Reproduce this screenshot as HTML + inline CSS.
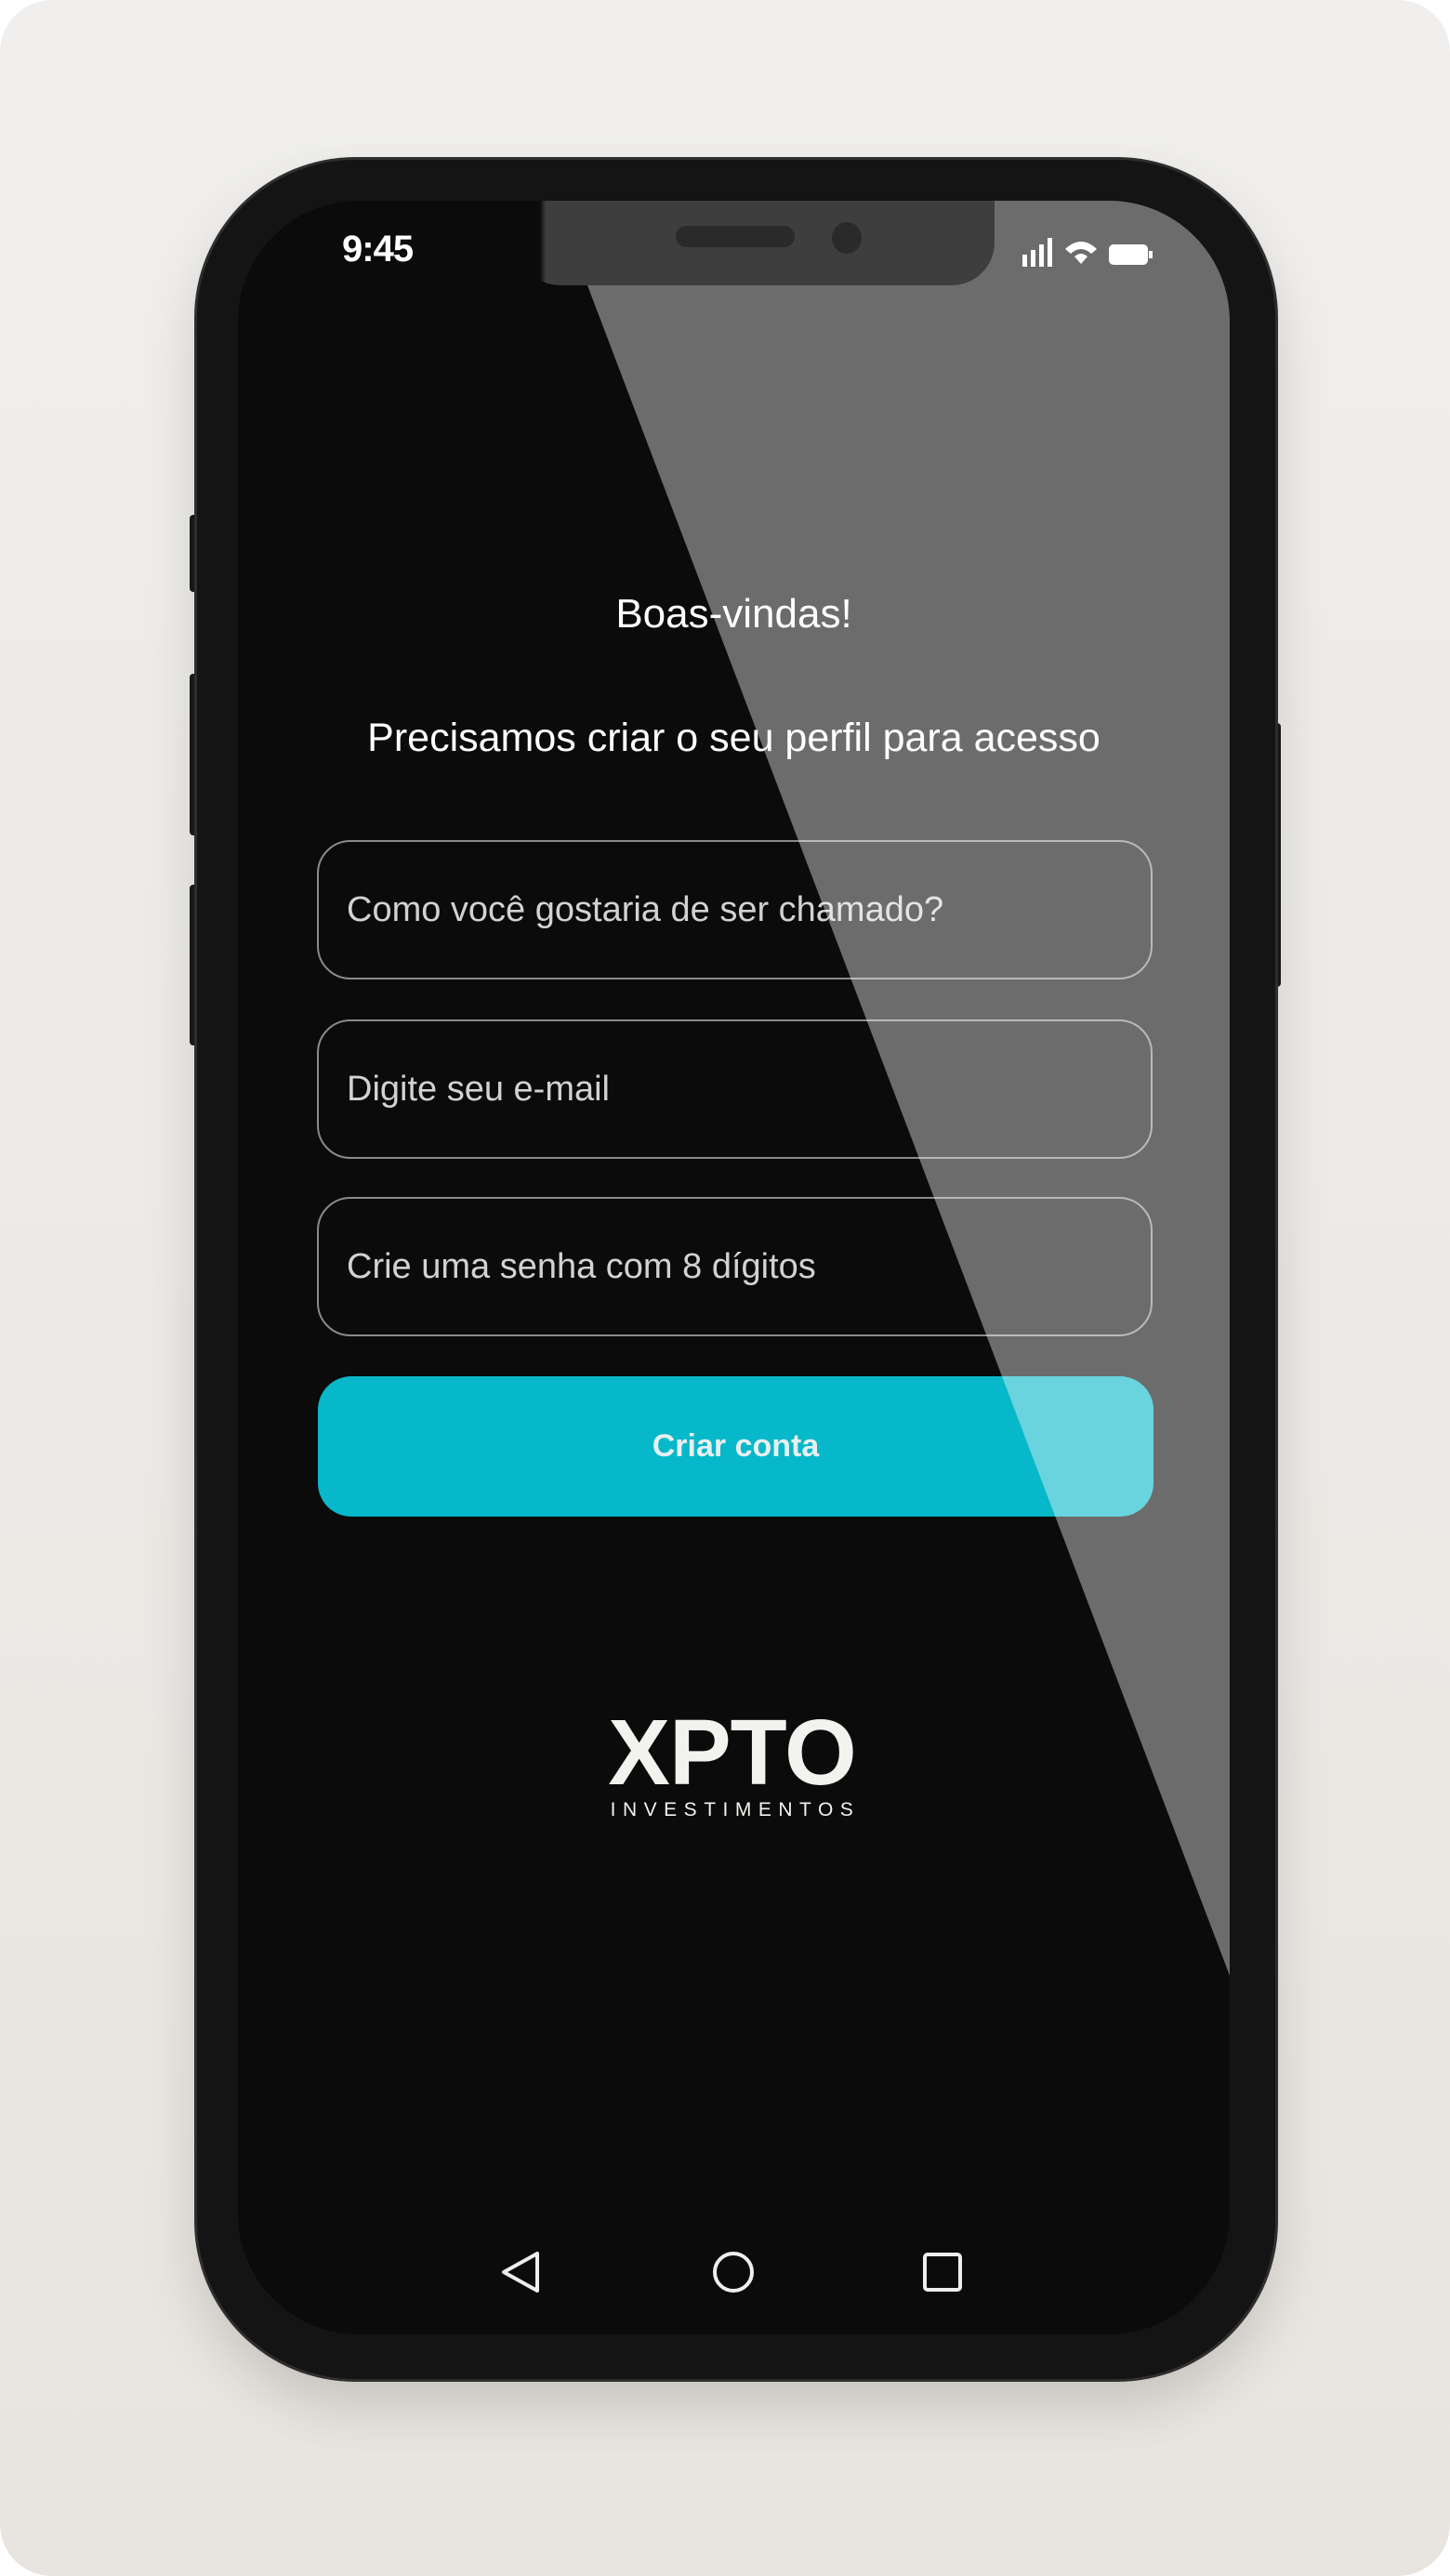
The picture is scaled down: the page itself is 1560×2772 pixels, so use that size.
<!DOCTYPE html>
<html><head><meta charset="utf-8"><style>
*{margin:0;padding:0;box-sizing:border-box}
body{width:1560px;height:2772px;background:#fff;position:relative;overflow:hidden;font-family:"Liberation Sans",sans-serif}
.bg{position:absolute;left:0;top:0;width:1560px;height:2772px;border-radius:56px;background:linear-gradient(#f0efed,#ebe8e4 70%,#e8e4df)}
.phone{position:absolute;left:212px;top:172px;width:1160px;height:2388px;border-radius:170px;background:#141414;box-shadow:0 0 0 3px #2e2e2e,0 30px 60px rgba(0,0,0,.15)}
.btn{position:absolute;background:#1a1a1a;border-radius:4px}
.screen{position:absolute;left:256px;top:216px;width:1067px;height:2296px;border-radius:130px;background:#0b0b0b;overflow:hidden}
.glare{position:absolute;left:0;top:0;width:1067px;height:2296px}
.notch{position:absolute;left:301px;top:0;width:513px;height:91px;border-radius:0 0 46px 46px;background:linear-gradient(to right,#0b0b0b 0,#0b0b0b 24px,#3e3e3e 30px)}
.t{position:absolute;color:#fff;text-align:center;width:1067px;left:0}
.inp{position:absolute;left:85px;width:899px;height:150px;border:2px solid #8a8a8a;border-radius:36px;color:#d2d2d2;font-size:38px;padding-left:30px;line-height:146px}
.cta{position:absolute;left:86px;top:1265px;width:899px;height:151px;border-radius:36px;background:#06b8c9;color:#e8efef;font-weight:bold;font-size:34px;text-align:center;line-height:151px}
</style></head><body>
<div class="bg"></div>
<div class="btn" style="left:204px;top:554px;width:10px;height:83px"></div>
<div class="btn" style="left:204px;top:725px;width:10px;height:174px"></div>
<div class="btn" style="left:204px;top:952px;width:10px;height:173px"></div>
<div class="btn" style="left:1368px;top:778px;width:10px;height:284px"></div>
<div class="phone"></div>
<div class="screen">
  <div class="t" style="top:420px;font-size:44px">Boas-vindas!</div>
  <div class="t" style="top:554px;font-size:43px">Precisamos criar o seu perfil para acesso</div>
  <div class="inp" style="top:688px">Como você gostaria de ser chamado?</div>
  <div class="inp" style="top:881px">Digite seu e-mail</div>
  <div class="inp" style="top:1072px">Crie uma senha com 8 dígitos</div>
  <div class="cta">Criar conta</div>
  <div style="position:absolute;left:386px;top:1628px;width:291px;text-align:center;color:#f2f2ee">
    <div style="font-size:100px;font-weight:bold;line-height:84px;letter-spacing:-1px">XPTO</div>
    <div style="font-size:21px;letter-spacing:7.5px;margin-top:8px;margin-right:-7px">INVESTIMENTOS</div>
  </div>
  <svg style="position:absolute;left:0;top:0" width="1067" height="2296">
    <path d="M286 2229 L322 2209 L322 2249 Z" fill="none" stroke="#eee" stroke-width="4" stroke-linejoin="round"/>
    <circle cx="533" cy="2229" r="20" fill="none" stroke="#eee" stroke-width="4"/>
    <rect x="739" y="2210" width="38" height="38" rx="3" fill="none" stroke="#eee" stroke-width="4"/>
  </svg>
  <svg class="glare" width="1067" height="2296"><polygon points="330,-30 1067,1910 1067,0" fill="rgba(255,255,255,0.4)"/></svg>
  <div class="notch">
    <div style="position:absolute;left:170px;top:27px;width:128px;height:23px;border-radius:12px;background:#2a2a2a"></div>
    <div style="position:absolute;left:338px;top:23px;width:32px;height:34px;border-radius:50%;background:#2a2a2a"></div>
  </div>
  <div style="position:absolute;left:112px;top:30px;color:#fff;font-weight:bold;font-size:40px;letter-spacing:-1px">9:45</div>
  <svg style="position:absolute;left:842px;top:38px" width="170" height="40">
    <rect x="2" y="20" width="5" height="13" fill="#fff"/><rect x="11" y="15" width="5" height="18" fill="#fff"/><rect x="20" y="9" width="5" height="24" fill="#fff"/><rect x="29" y="2" width="5" height="31" fill="#fff"/>
    <path d="M48 14 Q65 -2 82 14 L76 19 Q65 9 54 19 Z M58 22 Q65 16 72 22 L65 30 Z" fill="#fff"/>
    <rect x="96" y="10" width="40" height="20" rx="4" fill="#fff" stroke="#fff" stroke-width="2"/><rect x="138" y="16" width="4" height="8" fill="#fff"/>
  </svg>
</div>
</body></html>
